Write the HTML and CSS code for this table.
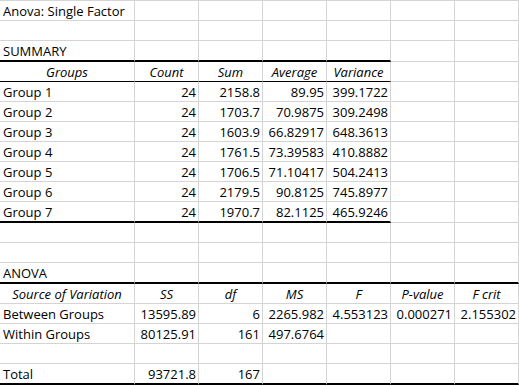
FILE: index.html
```html
<!DOCTYPE html>
<html>
<head>
<meta charset="utf-8">
<title>Anova: Single Factor</title>
<link rel="stylesheet" href="styles.css">
</head>
<body>
<div class="sheet">
  <div class="c">Anova: Single Factor</div><div class="c"></div><div class="c"></div><div class="c"></div><div class="c"></div><div class="c"></div><div class="c"></div>
  <div class="c"></div><div class="c"></div><div class="c"></div><div class="c"></div><div class="c"></div><div class="c"></div><div class="c"></div>
  <div class="c tk">SUMMARY</div><div class="c tk"></div><div class="c tk"></div><div class="c tk"></div><div class="c tk"></div><div class="c"></div><div class="c"></div>
  <div class="c h hb">Groups</div><div class="c h hb">Count</div><div class="c h hb">Sum</div><div class="c h hb">Average</div><div class="c h hb">Variance</div><div class="c"></div><div class="c"></div>
  <div class="c">Group 1</div><div class="c n">24</div><div class="c n">2158.8</div><div class="c n">89.95</div><div class="c n">399.1722</div><div class="c"></div><div class="c"></div>
  <div class="c">Group 2</div><div class="c n">24</div><div class="c n">1703.7</div><div class="c n">70.9875</div><div class="c n">309.2498</div><div class="c"></div><div class="c"></div>
  <div class="c">Group 3</div><div class="c n">24</div><div class="c n">1603.9</div><div class="c n">66.82917</div><div class="c n">648.3613</div><div class="c"></div><div class="c"></div>
  <div class="c">Group 4</div><div class="c n">24</div><div class="c n">1761.5</div><div class="c n">73.39583</div><div class="c n">410.8882</div><div class="c"></div><div class="c"></div>
  <div class="c">Group 5</div><div class="c n">24</div><div class="c n">1706.5</div><div class="c n">71.10417</div><div class="c n">504.2413</div><div class="c"></div><div class="c"></div>
  <div class="c">Group 6</div><div class="c n">24</div><div class="c n">2179.5</div><div class="c n">90.8125</div><div class="c n">745.8977</div><div class="c"></div><div class="c"></div>
  <div class="c tk">Group 7</div><div class="c n tk">24</div><div class="c n tk">1970.7</div><div class="c n tk">82.1125</div><div class="c n tk">465.9246</div><div class="c"></div><div class="c"></div>
  <div class="c"></div><div class="c"></div><div class="c"></div><div class="c"></div><div class="c"></div><div class="c"></div><div class="c"></div>
  <div class="c"></div><div class="c"></div><div class="c"></div><div class="c"></div><div class="c"></div><div class="c"></div><div class="c"></div>
  <div class="c tk">ANOVA</div><div class="c tk"></div><div class="c tk"></div><div class="c tk"></div><div class="c tk"></div><div class="c tk"></div><div class="c tk"></div>
  <div class="c h">Source of Variation</div><div class="c h">SS</div><div class="c h">df</div><div class="c h">MS</div><div class="c h">F</div><div class="c h">P-value</div><div class="c h">F crit</div>
  <div class="c">Between Groups</div><div class="c n">13595.89</div><div class="c n">6</div><div class="c n">2265.982</div><div class="c n">4.553123</div><div class="c n">0.000271</div><div class="c n">2.155302</div>
  <div class="c">Within Groups</div><div class="c n">80125.91</div><div class="c n">161</div><div class="c n">497.6764</div><div class="c"></div><div class="c"></div><div class="c"></div>
  <div class="c"></div><div class="c"></div><div class="c"></div><div class="c"></div><div class="c"></div><div class="c"></div><div class="c"></div>
  <div class="c tk">Total</div><div class="c n tk">93721.8</div><div class="c n tk">167</div><div class="c tk"></div><div class="c tk"></div><div class="c tk"></div><div class="c tk"></div>
</div>
</body>
</html>
```
FILE: styles.css
```css
html, body {
  margin: 0;
  padding: 0;
  background: #ffffff;
}

.sheet {
  display: grid;
  grid-template-columns: 135px repeat(6, 64px);
  width: 519px;
  border-top: 1px solid #d4d4d4;
  font-family: "Open Sans", "Lato", sans-serif;
  font-size: 13px;
  color: #000000;
}

.c {
  box-sizing: border-box;
  min-height: 20px;
  display: flex;
  align-items: flex-end;
  justify-content: flex-start;
  padding: 0 2px 0 3px;
  line-height: 17px;
  white-space: nowrap;
  border-right: 1px solid #d4d4d4;
  border-bottom: 1px solid #d4d4d4;
}

.n {
  justify-content: flex-end;
}

.h {
  justify-content: center;
  font-style: italic;
  padding: 0 1px;
}

.hb {
  border-bottom-color: #000000;
}

.tk {
  min-height: 21px;
  border-bottom: 2px solid #000000;
}
```
